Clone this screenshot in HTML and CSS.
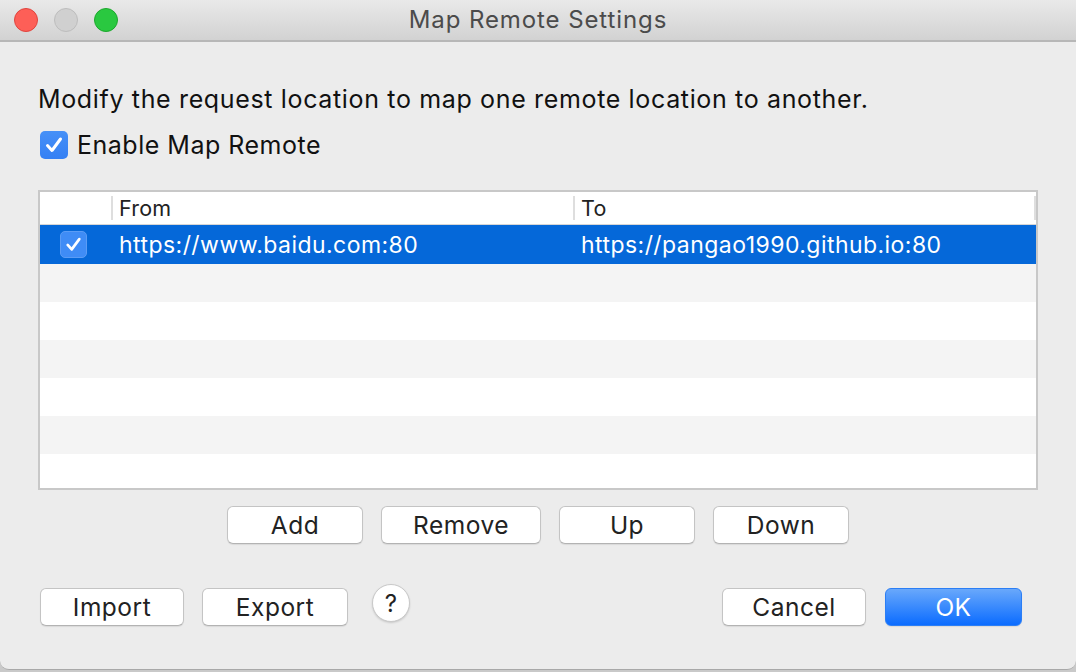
FILE: index.html
```html
<!DOCTYPE html>
<html>
<head>
<meta charset="utf-8">
<link rel="stylesheet" href="styles.css">
</head>
<body>
<div class="window">
  <div class="titlebar">
    <div class="lights">
      <span class="light red"></span>
      <span class="light gray"></span>
      <span class="light green"></span>
    </div>
    <div class="title">Map Remote Settings</div>
    <div></div>
  </div>
  <div class="content">
    <p class="desc">Modify the request location to map one remote location to another.</p>
    <label class="enable">
      <span class="cb"><svg viewBox="0 0 28 28" width="28" height="28"><path d="M7.5 14.5 L12 19.5 L20.5 8" fill="none" stroke="#fff" stroke-width="3" stroke-linecap="round" stroke-linejoin="round"/></svg></span>
      <span>Enable Map Remote</span>
    </label>
    <div class="table">
      <div class="thead">
        <div class="th c0"></div>
        <div class="th c1">From</div>
        <div class="th c2">To</div>
        <div class="th c3"></div>
      </div>
      <div class="row sel">
        <div class="td c0"><span class="cb small"><svg viewBox="0 0 28 28" width="27" height="27"><path d="M7.5 14.5 L12 19.5 L20.5 8" fill="none" stroke="#fff" stroke-width="3" stroke-linecap="round" stroke-linejoin="round"/></svg></span></div>
        <div class="td c1">https://www.baidu.com:80</div>
        <div class="td c2">https://pangao1990.github.io:80</div>
      </div>
      <div class="row alt"></div>
      <div class="row"></div>
      <div class="row alt"></div>
      <div class="row"></div>
      <div class="row alt"></div>
      <div class="row"></div>
    </div>
    <div class="actions">
      <button class="btn w136">Add</button>
      <button class="btn w160">Remove</button>
      <button class="btn w136">Up</button>
      <button class="btn w136">Down</button>
    </div>
    <div class="footer">
      <div class="left">
        <button class="btn w144">Import</button>
        <button class="btn w146">Export</button>
        <button class="help">?</button>
      </div>
      <div class="right">
        <button class="btn w144">Cancel</button>
        <button class="btn ok">OK</button>
      </div>
    </div>
  </div>
</div>
</body>
</html>
```
FILE: styles.css
```css
* { box-sizing: border-box; }
html, body { margin: 0; padding: 0; }
body {
  width: 1076px;
  height: 672px;
  background: #c9c9c9;
  font-family: Inter, "Liberation Sans", sans-serif;
  overflow: hidden;
}
.window {
  width: 1076px;
  height: 670px;
  background: #ececec;
  border-radius: 0 0 9px 9px;
  border-bottom: 1px solid #a8a8a8;
  overflow: hidden;
}
.titlebar {
  height: 42px;
  display: grid;
  grid-template-columns: 1fr auto 1fr;
  align-items: center;
  background: linear-gradient(#e9e9e9, #d2d2d2);
  border-bottom: 2px solid #b7b7b7;
}
.lights {
  display: flex;
  gap: 16px;
  padding-left: 14px;
  padding-bottom: 1px;
}
.light {
  width: 24px;
  height: 24px;
  border-radius: 50%;
}
.red { background: #fd5f57; border: 1px solid #e0443e; }
.gray { background: #d0d0d0; border: 1px solid #bdbdbd; }
.green { background: #2ac840; border: 1px solid #1ca82d; }
.title {
  font-size: 24px;
  letter-spacing: 0.9px;
  color: #4b4b4b;
  padding-bottom: 2px;
}
.content {
  padding: 0 38px;
}
.desc {
  margin: 42px 0 0 0;
  font-size: 25px;
  letter-spacing: 0.65px;
  line-height: 30px;
  color: #111;
}
.enable {
  display: flex;
  align-items: center;
  gap: 9px;
  height: 28px;
  margin-top: 17px;
  margin-left: 2px;
  font-size: 25px;
  letter-spacing: 0.5px;
  line-height: 28px;
  color: #111;
}
.cb {
  width: 28px;
  height: 28px;
  border-radius: 5px;
  background: linear-gradient(#4690f7, #3580f4);
  display: flex;
  align-items: center;
  justify-content: center;
}
.cb.small {
  width: 27px;
  height: 27px;
  background: #3f8cf6;
  border: 1px solid #5b9cf5;
}
.table {
  margin-top: 31px;
  height: 300px;
  border: 2px solid #c8c8c8;
  background: #fff;
  overflow: hidden;
}
.thead {
  display: flex;
  height: 33px;
  border-bottom: 1px solid #d6d6d6;
  background: #fff;
  align-items: center;
}
.th {
  height: 24px;
  font-size: 21.5px;
  line-height: 24px;
  letter-spacing: 0.2px;
  color: #222;
  padding-left: 6px;
}
.c0 { width: 71px; }
.c1 { width: 462px; }
.c2 { width: 461px; }
.th.c1, .th.c2, .th.c3 { border-left: 2px solid #dedede; }
.th.c3 { width: 2px; padding: 0; }
.th.c0 { padding: 0; }
.row {
  display: flex;
  align-items: center;
  height: 38px;
  background: #fff;
}
.row.alt { background: #f4f4f4; }
.row.sel {
  height: 39px;
  background: #0568d9;
  color: #fff;
}
.td {
  font-size: 23px;
  letter-spacing: 0.45px;
  padding-left: 8px;
}
.td.c0 {
  padding-left: 20px;
  display: flex;
  align-items: center;
}
.actions {
  display: flex;
  justify-content: center;
  gap: 18px;
  margin-top: 16px;
}
.btn {
  height: 38px;
  border: 1px solid #c4c4c4;
  border-bottom-color: #b3b3b3;
  border-radius: 6px;
  background: #fff;
  box-shadow: 0 1px 1px rgba(0,0,0,0.08);
  font-family: inherit;
  font-size: 24.5px;
  letter-spacing: 0.5px;
  color: #222;
  padding: 0;
}
.w136 { width: 136px; }
.w160 { width: 160px; }
.w144 { width: 144px; }
.w146 { width: 146px; }
.footer {
  display: flex;
  justify-content: space-between;
  align-items: center;
  margin-top: 44px;
  padding-left: 2px;
  padding-right: 16px;
}
.left, .right {
  display: flex;
  align-items: center;
  gap: 18px;
}
.right { gap: 19px; }
.help {
  width: 38px;
  height: 38px;
  margin-left: 6px;
  margin-top: -8px;
  border-radius: 50%;
  border: 1px solid #c9c9c9;
  background: #fff;
  box-shadow: 0 1px 2px rgba(0,0,0,0.15);
  font-family: inherit;
  font-size: 24px;
  color: #222;
  padding: 0;
}
.ok {
  width: 137px;
  border: 1px solid #2b7ef5;
  background: linear-gradient(#69a8fb, #0b6cff);
  color: #fff;
}
```
